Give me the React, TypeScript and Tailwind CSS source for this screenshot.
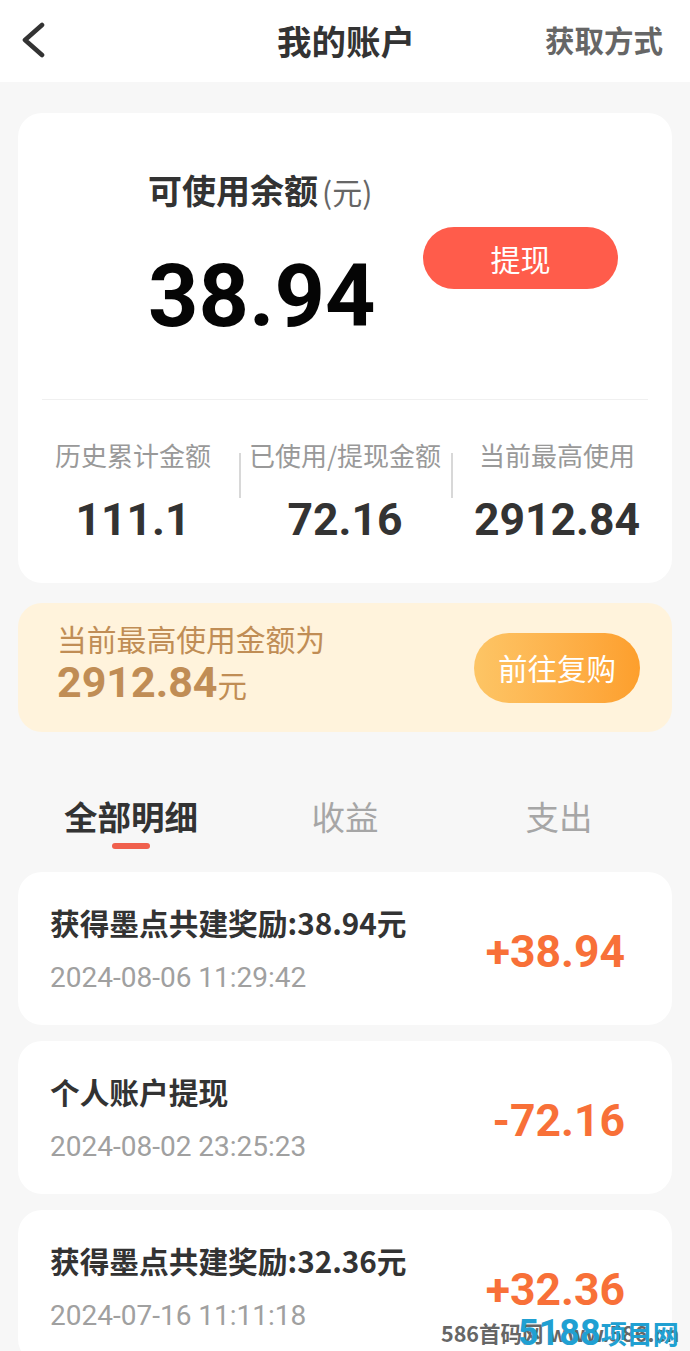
const cjk = "font-['Noto_Sans_CJK_SC','Noto_Sans',sans-serif]"
const num = "font-['Roboto','Noto_Sans_CJK_SC',sans-serif]"

const stats = [
  { label: "历史累计金额", value: "111.1" },
  { label: "已使用/提现金额", value: "72.16" },
  { label: "当前最高使用", value: "2912.84" },
]

const records = [
  { title: "获得墨点共建奖励:38.94元", time: "2024-08-06 11:29:42", amount: "+38.94" },
  { title: "个人账户提现", time: "2024-08-02 23:25:23", amount: "-72.16" },
  { title: "获得墨点共建奖励:32.36元", time: "2024-07-16 11:11:18", amount: "+32.36" },
]

export default function App() {
  return (
    <div className={`relative h-[1351px] w-[690px] overflow-hidden bg-[#f7f7f7] ${cjk}`}>
      <header className="flex h-[82px] items-center bg-white pb-[2px] pl-[21px] pr-[27px]">
        <svg className="h-[36px] w-[26px]" viewBox="0 0 26 36" fill="none" stroke="#333333" strokeWidth="4.6" strokeLinecap="round" strokeLinejoin="round">
          <path d="M21 3 L4 18 L21 33" />
        </svg>
        <h1 className="ml-[230px] text-[34.5px] font-bold leading-none text-[#333333]">我的账户</h1>
        <span className="ml-auto text-[29.5px] font-bold leading-none text-[#666666]">获取方式</span>
      </header>

      <main className="flex flex-col px-[18px] pt-[31px]">
        <section className="h-[470px] rounded-[24px] bg-white px-[24px]">
          <div className="flex h-[287px] border-b border-[#f0f0f0] pl-[106px]">
            <div className="w-[275px] pt-[55px]">
              <div className="flex items-baseline">
                <span className="text-[34px] font-bold leading-[44px] text-[#333333]">可使用余额</span>
                <span className="ml-[4px] text-[30px] leading-[44px] text-[#666666]">(元)</span>
              </div>
              <div className={`mt-[35px] text-[88px] font-bold leading-[96px] text-[#050505] ${num}`}>38.94</div>
            </div>
            <button className="mt-[114px] flex h-[62px] w-[195px] items-center justify-center rounded-full bg-[#ff5c4b] text-[30px] text-white">
              提现
            </button>
          </div>
          <div className="-ml-[15px] flex pt-[34px]">
            {stats.map((s, i) => (
              <div key={s.label} className="relative flex w-[212px] shrink-0 flex-col items-center">
                {i > 0 && <div className="absolute left-0 top-[19px] h-[45px] w-[2px] bg-[#d8d8d8]" />}
                <span className="whitespace-nowrap text-[26px] leading-[42px] text-[#999999]">{s.label}</span>
                <span className={`mt-[20px] text-[44.5px] font-bold leading-[48px] text-[#333333] ${num}`}>{s.value}</span>
              </div>
            ))}
          </div>
        </section>

        <section className="mt-[20px] flex h-[129px] items-center justify-between rounded-[24px] bg-[#fff3dc] pl-[39px] pr-[32px]">
          <div className="pb-[11px]">
            <div className="text-[29.8px] leading-[42px] text-[#c08d55]">当前最高使用金额为</div>
            <div className="flex items-baseline leading-[46px] text-[#c08d55]">
              <span className={`text-[43px] font-bold ${num}`}>2912.84</span>
              <span className="text-[29.5px]">元</span>
            </div>
          </div>
          <button className="flex h-[70px] w-[166px] items-center justify-center rounded-full bg-gradient-to-r from-[#fdc565] to-[#fd9f2c] text-[29.5px] text-white">
            前往复购
          </button>
        </section>

        <nav className="mt-[59px] flex h-[81px] items-start">
          <div className="flex w-[226px] flex-col items-center">
            <span className="text-[33.5px] font-bold leading-[50px] text-[#333333]">全部明细</span>
            <span className="mt-[2px] h-[6px] w-[38px] rounded-full bg-[#f0604d]" />
          </div>
          <div className="w-[202px] text-center text-[33.5px] leading-[50px] text-[#a6a6a6]">收益</div>
          <div className="w-[226px] text-center text-[33.5px] leading-[50px] text-[#a6a6a6]">支出</div>
        </nav>

        <ul className="flex flex-col gap-[16px]">
          {records.map((r) => (
            <li key={r.time} className="flex h-[153px] items-center justify-between rounded-[24px] bg-white pl-[32px] pr-[47px]">
              <div className="pt-[4px]">
                <div className="text-[29.7px] font-bold leading-[40px] text-[#333333]">{r.title}</div>
                <div className={`mt-[15px] text-[28px] leading-[40px] text-[#a0a0a0] ${num}`}>{r.time}</div>
              </div>
              <div className={`pt-[8px] text-[44.5px] font-bold leading-none text-[#f87038] ${num}`}>{r.amount}</div>
            </li>
          ))}
        </ul>
      </main>

      <div className="absolute left-[441px] top-[1321px] whitespace-nowrap text-[21.5px] font-bold leading-[24px] text-[#666666]">
        586首码网 www.586.cn
      </div>
      <div className="absolute left-[518px] top-[1318px] flex h-[30px] items-center whitespace-nowrap font-bold leading-none text-[#20a0d2]">
        <span className={`text-[36px] ${num}`}>5188</span>
        <span className="text-[26px]">项目网</span>
      </div>
    </div>
  )
}
